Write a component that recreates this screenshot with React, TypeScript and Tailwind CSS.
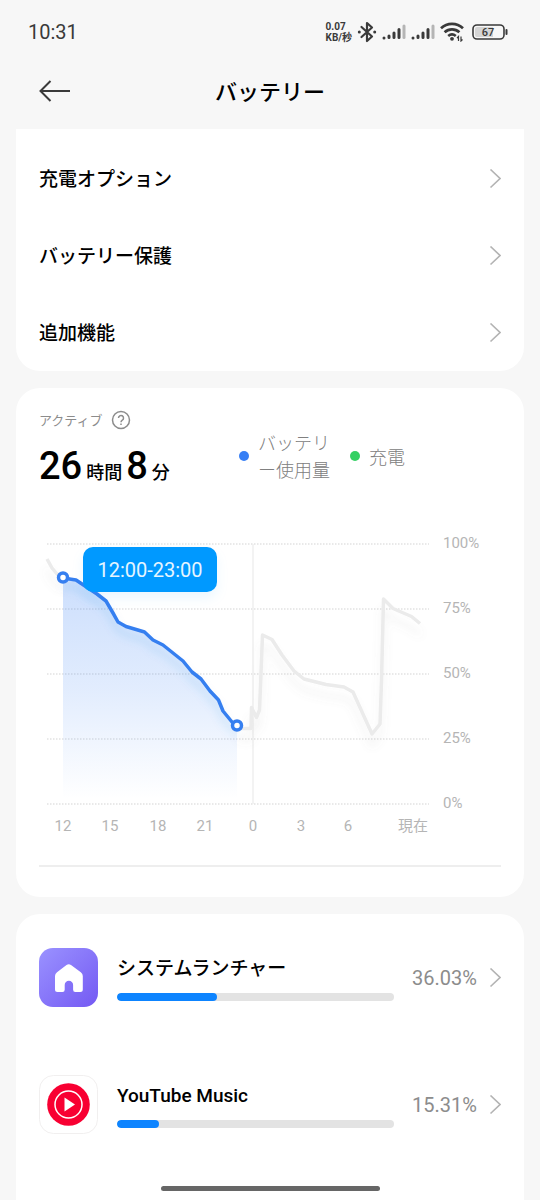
import type { ReactNode } from 'react';

const settings = ['充電オプション', 'バッテリー保護', '追加機能'];

const gridLines = [
  { label: '100%', y: 13 },
  { label: '75%', y: 78 },
  { label: '50%', y: 143 },
  { label: '25%', y: 208 },
  { label: '0%', y: 273 },
];

const hours = [
  { label: '12', x: 24 },
  { label: '15', x: 71 },
  { label: '18', x: 119 },
  { label: '21', x: 166 },
  { label: '0', x: 214 },
  { label: '3', x: 262 },
  { label: '6', x: 309 },
  { label: '現在', x: 374 },
];

const activeLine = '24,47 37,49 46,55 58,63 67,70 74,82 79,91 87,95.500 105.500,101 114,109 124,114 144,130 153,141 162,148 171,160 179.500,169 184,180 193,191 198,195';
const beforeLine = '8,28 13,37 18,43 24,47';
const afterLine = '198,195 203,197.500 212,197.500 212.500,176.500 217.500,186.500 220.500,179 221.500,155 223.500,104 233,108.500 243,124 255,140 265,148 287,153.500 305,156 314,161 333,203 341,193 342.500,150 344.500,68 354,77.500 372.500,85.500 381,92.500';

function Chevron() {
  return (
    <svg className="h-5 w-3 shrink-0" viewBox="0 0 12 20" fill="none" stroke="#b3b3b3" strokeWidth="1.600" aria-hidden="true">
      <path d="M1.500 .5 11 9.500 1.500 18.500" />
    </svg>
  );
}

function SignalIcon() {
  return (
    <svg className="h-4 w-6" viewBox="0 0 24 16" strokeWidth="3" strokeLinecap="round" aria-hidden="true">
      <path d="M2 14v0M7 12v1.500M12 9v4.500M17 5.500v8" stroke="#3a3a3a" />
      <path d="M22 2v11.500" stroke="#b5b5b5" />
    </svg>
  );
}

function StatusBar() {
  return (
    <div className="flex h-16 items-center justify-between pl-7 pr-8 text-[#3a3a3a]">
      <span className="text-xl">10:31</span>
      <div className="flex items-center gap-[5px]">
        <div className="text-[10px] leading-[11px] font-bold">
          <div>0.07</div>
          <div>KB/秒</div>
        </div>
        <svg className="h-6 w-5" viewBox="0 0 20 24" fill="none" stroke="#3a3a3a" strokeWidth="2.200" aria-hidden="true">
          <path d="M4.500 7 15 16.500 10 21V3l5 4.500L4.500 17" strokeLinejoin="round" strokeLinecap="round" />
          <path d="M2.300 12v0M17.700 12v0" strokeWidth="3" strokeLinecap="round" />
        </svg>
        <SignalIcon />
        <SignalIcon />
        <svg className="h-5 w-6" viewBox="0 0 24 20" fill="none" stroke="#3a3a3a" strokeWidth="2.700" aria-hidden="true">
          <path d="M1 6.200a16 16 0 0 1 22 0M4.600 10.200a11 11 0 0 1 14.800 0M8.200 14a6 6 0 0 1 7.600 0" />
          <circle cx="12" cy="16.800" r="1.900" fill="#3a3a3a" stroke="none" />
          <path d="M18.500 19v-4.500l-1.500 1.500M21 14.500V19l1.500-1.500" strokeWidth="1.200" />
        </svg>
        <svg className="ml-[3px] h-4 w-9" viewBox="0 0 36 16" aria-label="67">
          <rect x="1" y="1" width="31" height="14" rx="4" fill="#f7f7f7" stroke="#3a3a3a" strokeWidth="1.600" />
          <path d="M5 3h16v10H5a2 2 0 0 1-2-2V5a2 2 0 0 1 2-2" fill="#d5d5d5" />
          <path d="M34.500 6v4" stroke="#3a3a3a" strokeWidth="2" strokeLinecap="round" />
          <text x="16" y="12" textAnchor="middle" className="fill-[#3a3a3a] text-[11px] font-medium">67</text>
        </svg>
      </div>
    </div>
  );
}

function Legend({ color, children }: { color: string; children: ReactNode }) {
  return (
    <div className="flex items-center gap-[9px]">
      <span className={`size-[10px] shrink-0 rounded-full ${color}`} />
      <span className="max-w-[72px] [line-break:anywhere]">{children}</span>
    </div>
  );
}

function UsageChart() {
  return (
    <svg className="mt-[30px] w-full" viewBox="0 0 462 310" fill="none" role="img" aria-label="バッテリー使用量">
      <defs>
        <linearGradient id="area" x1="0" y1="47" x2="0" y2="268" gradientUnits="userSpaceOnUse">
          <stop offset="0" stopColor="#3b82f6" stopOpacity="0.260" />
          <stop offset="0.500" stopColor="#3b82f6" stopOpacity="0.150" />
          <stop offset="1" stopColor="#3b82f6" stopOpacity="0" />
        </linearGradient>
        <filter id="soft" x="-20%" y="-20%" width="140%" height="150%">
          <feDropShadow dx="0" dy="11" stdDeviation="4" floodColor="#777777" floodOpacity="0.100" />
        </filter>
        <filter id="glow" x="-20%" y="-20%" width="140%" height="150%">
          <feDropShadow dx="0" dy="8" stdDeviation="4" floodColor="#1b85d8" floodOpacity="0.180" />
        </filter>
      </defs>
      {gridLines.map((line) => (
        <g key={line.label}>
          <path d={`M8 ${line.y}H390`} stroke="#e2e2e2" strokeWidth="1.500" strokeDasharray="1.500 1.500" />
          <text x="404" y={line.y + 4} className="fill-[#b5b5b5] text-[15px]">{line.label}</text>
        </g>
      ))}
      <path d="M214 13v260" stroke="#efefef" strokeWidth="1.500" />
      {hours.map((hour) => (
        <text key={hour.label} x={hour.x} y="300" textAnchor="middle" className="fill-[#b5b5b5] text-[15px]">{hour.label}</text>
      ))}
      <g stroke="#ebebeb" strokeWidth="3.500" strokeLinejoin="round" filter="url(#soft)">
        <polyline points={beforeLine} />
        <polyline points={afterLine} />
      </g>
      <polygon points={`${activeLine} 198,273 24,273`} fill="url(#area)" />
      <polyline points={activeLine} stroke="#367ff0" strokeWidth="3.500" strokeLinejoin="round" filter="url(#glow)" />
      <g fill="#ffffff" stroke="#367ff0" strokeWidth="3.500">
        <circle cx="24" cy="46.500" r="4.500" />
        <circle cx="198" cy="194.500" r="4.500" />
      </g>
      <rect x="44" y="16" width="134" height="45" rx="10" fill="#0099ff" className="drop-shadow-[0_6px_6px_#0099ff14]" />
      <text x="111" y="46" textAnchor="middle" className="fill-[#e5f5ff] text-xl">12:00-23:00</text>
    </svg>
  );
}

function LauncherIcon() {
  return (
    <svg className="size-[59px] shrink-0" viewBox="0 0 59 59" aria-hidden="true">
      <defs>
        <linearGradient id="launcher" x1="0" y1="0" x2="1" y2="1">
          <stop stopColor="#9a92ff" />
          <stop offset="1" stopColor="#7459f3" />
        </linearGradient>
      </defs>
      <rect width="59" height="59" rx="14" fill="url(#launcher)" />
      <path d="M27.500 17 18 24.300Q16 25.800 16 28V41.500q0 2.500 2.500 2.500h5q2.200 0 2.200-2.200V37a4.200 4.200 0 0 1 8.400 0v4.800q0 2.200 2.200 2.200h5q2.500 0 2.500-2.500V28q0-2.200-2-3.700L32 17q-2.200-1.700-4.500 0" fill="#ffffff" />
    </svg>
  );
}

function MusicIcon() {
  return (
    <svg className="size-[59px] shrink-0" viewBox="0 0 59 59" aria-hidden="true">
      <rect x="0.500" y="0.500" width="58" height="58" rx="14" fill="#ffffff" stroke="#f1efef" />
      <circle cx="29.500" cy="29.500" r="21.300" fill="#f80032" />
      <circle cx="29.500" cy="29.500" r="13.500" fill="none" stroke="#ffffff" strokeWidth="1.500" />
      <path d="M25.500 22.500v14l10.500-7z" fill="#ffffff" />
    </svg>
  );
}

const apps = [
  { name: 'システムランチャー', percent: 36.03, icon: <LauncherIcon /> },
  { name: 'YouTube Music', percent: 15.31, icon: <MusicIcon /> },
];

export default function App() {
  return (
    <div lang="ja" className="flex min-h-screen flex-col bg-[#f7f7f7] font-[Roboto,'Noto_Sans_CJK_JP',sans-serif] text-black">
      <StatusBar />
      <header className="grid h-[65px] grid-cols-[64px_1fr_64px] items-center px-4 pb-3">
        <button type="button" aria-label="戻る" className="pl-[22px]">
          <svg className="h-6 w-8" viewBox="0 0 32 24" fill="none" stroke="#3a3a3a" strokeWidth="2" aria-hidden="true">
            <path d="M12.500 2 2.500 12l10 10M2.500 12H32" />
          </svg>
        </button>
        <h1 className="text-center font-['Noto_Sans_CJK_JP',sans-serif] text-[22px] font-medium">バッテリー</h1>
      </header>

      <main className="flex flex-1 flex-col gap-[17px] px-4">
        <nav className="rounded-b-3xl bg-white px-[23px] pt-[11px] font-['Noto_Sans_CJK_JP',sans-serif]">
          {settings.map((name) => (
            <a key={name} href="#" className="flex h-[77px] items-center justify-between text-[19px] font-medium">
              {name}
              <Chevron />
            </a>
          ))}
        </nav>

        <section className="rounded-3xl bg-white px-[23px] pt-5 pb-[30px]">
          <div className="flex items-start">
            <div className="w-[200px]">
              <div className="flex h-6 items-center gap-2 font-['Noto_Sans_CJK_JP',sans-serif] text-[13px] text-[#8c8c8c]">
                アクティブ
                <button type="button" aria-label="ヘルプ">
                  <svg className="size-5" viewBox="0 0 20 20" fill="none" stroke="#8c8c8c" strokeWidth="1.500" aria-hidden="true">
                    <circle cx="10" cy="10" r="8.500" />
                    <path d="M7.500 8a2.500 2.500 0 1 1 3.800 2.100Q10 10.900 10 12.200" />
                    <path d="M10 13.500v1.500" />
                  </svg>
                </button>
              </div>
              <p className="mt-[6px] flex items-baseline gap-1 text-lg leading-[56px] font-medium">
                <span className="text-[38px]">26</span>
                時間
                <span className="text-[38px]">8</span>
                分
              </p>
            </div>
            <div className="mt-[21px] flex items-center gap-5 font-['Noto_Sans_CJK_JP',sans-serif] text-lg leading-[27px] font-light text-[#808080]">
              <Legend color="bg-[#367ff5]">バッテリー使用量</Legend>
              <Legend color="bg-[#34d063]">充電</Legend>
            </div>
          </div>
          <UsageChart />
          <hr className="mt-6 border-t-2 border-[#eeeeee]" />
        </section>

        <section className="flex-1 rounded-t-3xl bg-white px-[23px]">
          {apps.map((app) => (
            <a key={app.name} href="#" className="flex h-[127px] items-center">
              {app.icon}
              <div className="ml-[19px] min-w-0 flex-1">
                <p className="text-[19px] leading-7 font-medium">{app.name}</p>
                <div className="mt-[10px] h-2 overflow-hidden rounded-full bg-[#e3e3e3]">
                  <div className="h-full rounded-full bg-[#0d84ff]" style={{ width: `${app.percent}%` }} />
                </div>
              </div>
              <span className="mr-3 ml-[18px] text-xl text-[#8c8c8c]">{app.percent}%</span>
              <Chevron />
            </a>
          ))}
        </section>
      </main>

      <div className="fixed inset-x-0 bottom-[9px] mx-auto h-[5px] w-[219px] rounded-full bg-[#666666]" />
    </div>
  );
}
